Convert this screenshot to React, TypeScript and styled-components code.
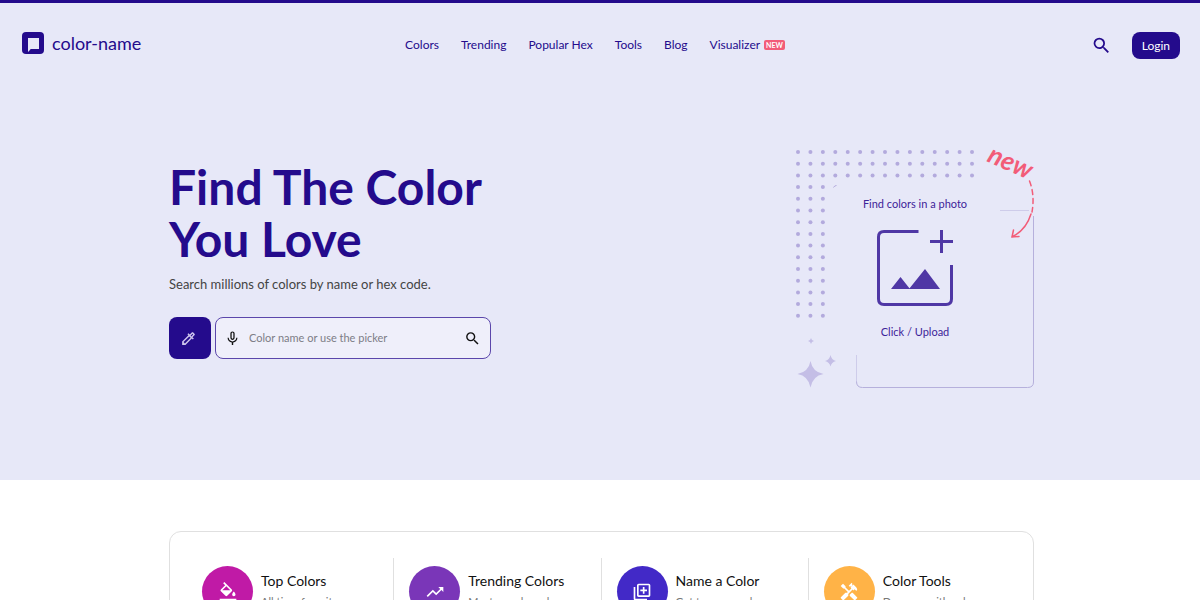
import React from "react";
import styled, { createGlobalStyle } from "styled-components";
import {
  MdSearch,
  MdMicNone,
  MdTrendingUp,
  MdFormatColorFill,
  MdOutlineLibraryAdd,
  MdHandyman,
  MdOutlineColorize,
} from "react-icons/md";

const GlobalStyle = createGlobalStyle`
  *, *::before, *::after { box-sizing: border-box; }
  body {
    margin: 0;
    background: #fff;
    color: #111;
    font-family: Lato, "Liberation Sans", sans-serif;
  }
  button, input { font: inherit; }
  h1, h2, p, ul { margin: 0; padding: 0; }
  a { color: inherit; text-decoration: none; }
`;

const Hero = styled.div`
  border-top: 3px solid #240b8c;
  background: #e7e8f8;
  color: #240b8c;
`;

const Header = styled.header`
  display: grid;
  grid-template-columns: 1fr auto 1fr;
  align-items: start;
  padding: 29px 20px 29px 22px;
`;

const Brand = styled.a`
  display: flex;
  align-items: center;
  gap: 8px;
  font-size: 18px;
  line-height: 22px;
`;

const Nav = styled.nav`
  display: flex;
  gap: 22px;
  margin-right: 12px;
  font-size: 12px;
  line-height: 26px;
`;

const NavLink = styled.a`
  display: flex;
  align-items: center;
  gap: 4px;
`;

const Badge = styled.span`
  padding: 0 2px;
  border-radius: 2px;
  background: #f25c78;
  color: #fff;
  font-size: 7px;
  font-weight: 700;
  line-height: 10px;
`;

const Actions = styled.div`
  display: flex;
  justify-content: flex-end;
  align-items: center;
  gap: 20px;
`;

const IconButton = styled.button<{ $color: string }>`
  display: flex;
  padding: 0;
  border: 0;
  background: none;
  color: ${(p) => p.$color};
  cursor: pointer;
`;

const LoginButton = styled.button`
  padding: 0 10px;
  border: 0;
  border-radius: 8px;
  background: #240b8c;
  color: #fff;
  font-size: 12px;
  line-height: 27px;
  cursor: pointer;
`;

const HeroBody = styled.section`
  display: flex;
  justify-content: space-between;
  align-items: flex-start;
  gap: 32px;
  padding: 60px 165px 90px 169px;
  @media (max-width: 900px) {
    flex-wrap: wrap;
    padding: 32px 24px;
  }
`;

const Intro = styled.div`
  flex: 0 1 322px;
  padding-top: 13px;
`;

const Title = styled.h1`
  font-size: 48px;
  font-weight: 700;
  line-height: 52px;
  white-space: nowrap;
`;

const Lead = styled.p`
  padding: 9px 0 23px;
  color: #444;
  font-size: 13px;
  line-height: 20px;
  white-space: nowrap;
`;

const SearchForm = styled.form`
  display: flex;
  gap: 4px;
`;

const PickerButton = styled.button`
  display: flex;
  justify-content: center;
  align-items: center;
  flex: none;
  width: 42px;
  height: 42px;
  padding: 0 3px 0 0;
  border: 0;
  border-radius: 8px;
  background: #240b8c;
  color: #cfc6ee;
  cursor: pointer;
`;

const SearchBox = styled.div`
  display: flex;
  align-items: center;
  flex: 1;
  gap: 8px;
  height: 42px;
  padding: 0 9px 0 8px;
  border: 1px solid #5b46ab;
  border-radius: 8px;
  background: #efeffa;
`;

const SearchInput = styled.input`
  flex: 1;
  min-width: 0;
  padding: 0;
  border: 0;
  outline: 0;
  background: none;
  color: #111;
  font-size: 11px;
  line-height: 20px;
  &::placeholder { color: #7d7d86; opacity: 1; }
`;

const UploadButton = styled.button`
  position: relative;
  display: flex;
  flex-direction: column;
  align-items: center;
  gap: 15px;
  flex: none;
  width: 240px;
  padding: 46px 0 48px;
  border: 0;
  background: none;
  color: #3d2399;
  font-size: 11px;
  line-height: 20px;
  cursor: pointer;
`;

const Ornament = styled.svg`
  position: absolute;
  inset: 0;
  overflow: visible;
`;

const FeatureSection = styled.section`
  padding: 51px 166px 51px 169px;
  @media (max-width: 900px) { padding: 32px 24px; }
`;

const FeatureList = styled.ul`
  display: grid;
  grid-template-columns: repeat(auto-fit, minmax(190px, 1fr));
  padding: 26px 18px 26px 16px;
  border: 1px solid #e0e0e0;
  border-radius: 12px;
  list-style: none;
`;

const Feature = styled.li`
  padding: 8px 0 8px 16px;
  & + & {
    padding-left: 15px;
    border-left: 1px solid #e0e0e0;
  }
`;

const FeatureLink = styled.a`
  display: flex;
  gap: 8px;
`;

const Disc = styled.span<{ $color: string }>`
  display: flex;
  justify-content: center;
  align-items: center;
  flex: none;
  width: 51px;
  height: 51px;
  border-radius: 50%;
  background: ${(p) => p.$color};
  color: #fff;
`;

const FeatureTitle = styled.h2`
  padding-top: 4px;
  font-size: 14px;
  font-weight: 400;
  line-height: 22px;
`;

const FeatureText = styled.p`
  color: #777;
  font-size: 11px;
  line-height: 20px;
`;

const links = ["Colors", "Trending", "Popular Hex", "Tools", "Blog"];

const features = [
  { title: "Top Colors", text: "All time favorites", color: "#c01aa6", Icon: MdFormatColorFill },
  { title: "Trending Colors", text: "Most popular colors", color: "#7a36b8", Icon: MdTrendingUp },
  { title: "Name a Color", text: "Get to name colors", color: "#4229c7", Icon: MdOutlineLibraryAdd },
  { title: "Color Tools", text: "Do more with colors", color: "#ffb347", Icon: MdHandyman },
];

const dots: Array<[number, number]> = [];
for (let row = 0; row < 15; row++) {
  for (let col = 0; col < (row < 3 ? 15 : 3); col++) {
    dots.push([3 + col * 12.43, 4 + row * 11.7]);
  }
}

function UploadOrnament() {
  return (
    <Ornament viewBox="0 0 240 242" width="240" height="242" aria-hidden="true">
      <g fill="#b3aadd">
        {dots.map(([x, y]) => (
          <circle key={`${x}-${y}`} cx={x} cy={y} r="2" />
        ))}
      </g>
      <path d="M38.500 39.500q1-2 3-2" fill="none" stroke="#b3aadd" />
      <g fill="none" stroke="#b6b0dc">
        <path d="M205 62.500H234" opacity=".5" />
        <path d="M238.500 68V234q0 5.500-6 5.500H67.500q-6 0-6-6" />
        <path d="M61.500 207V234" opacity=".5" />
      </g>
      <g fill="#c4bee6">
        <path d="M15.500 213Q17.500 224 28.500 226Q17.500 228 15.500 239.500Q13.500 228 2.500 226Q13.500 224 15.500 213Z" />
        <path d="M35.500 207Q36.500 212 41 213Q36.500 214 35.500 218.500Q34.500 214 30 213Q34.500 212 35.500 207Z" />
        <path d="M16 190Q16.500 192.500 19 193Q16.500 193.500 16 196Q15.500 193.500 13 193Q15.500 192.500 16 190Z" />
      </g>
      <g fill="none" stroke="#f25c78" strokeWidth="1.500" strokeLinecap="round">
        <path d="M234.500 33Q240 47 237 64" strokeDasharray="5 4" />
        <path d="M236 66Q231 82 217.500 88.500" />
        <path d="M218.500 82L217 89L224 88.500" />
      </g>
      <text
        x="191"
        y="13"
        transform="rotate(24 191 13)"
        fill="#f25c78"
        fontFamily="Lato, sans-serif"
        fontSize="26"
        fontStyle="italic"
        fontWeight="700"
      >
        new
      </text>
    </Ornament>
  );
}

function AddPhotoIcon() {
  return (
    <svg viewBox="0 0 78 78" width="78" height="78" aria-hidden="true">
      <g fill="none" stroke="#4f37a5" strokeWidth="3">
        <path d="M42.500 2.500H8Q2.500 2.500 2.500 8V70Q2.500 75.500 8 75.500H70Q75.500 75.500 75.500 70V36" />
        <path d="M65.500 1V24M54 12.500H77" />
      </g>
      <path d="M15 60L24.500 48L34 60ZM33 60L49 40L64 60Z" fill="#4f37a5" />
    </svg>
  );
}

export default function App() {
  return (
    <>
      <GlobalStyle />
      <Hero>
        <Header>
          <Brand href="#">
            <svg viewBox="0 0 22 22" width="22" height="22" aria-hidden="true">
              <rect width="22" height="22" rx="4" fill="#240b8c" />
              <path d="M6 6H17V17H9Q8 17 7.500 18.500L6 20Z" fill="#e7e8f8" />
            </svg>
            color-name
          </Brand>
          <Nav aria-label="Main">
            {links.map((label) => (
              <NavLink key={label} href="#">{label}</NavLink>
            ))}
            <NavLink href="#">
              Visualizer <Badge>NEW</Badge>
            </NavLink>
          </Nav>
          <Actions>
            <IconButton type="button" aria-label="Search" $color="#240b8c">
              <MdSearch size={21} />
            </IconButton>
            <LoginButton type="button">Login</LoginButton>
          </Actions>
        </Header>
        <HeroBody>
          <Intro>
            <Title>Find The Color<br />You Love</Title>
            <Lead>Search millions of colors by name or hex code.</Lead>
            <SearchForm role="search" onSubmit={(e) => e.preventDefault()}>
              <PickerButton type="button" aria-label="Pick a color">
                <MdOutlineColorize size={17} />
              </PickerButton>
              <SearchBox>
                <IconButton type="button" aria-label="Search by voice" $color="#111">
                  <MdMicNone size={17} />
                </IconButton>
                <SearchInput aria-label="Color name" placeholder="Color name or use the picker" />
                <IconButton type="submit" aria-label="Submit search" $color="#111">
                  <MdSearch size={17} />
                </IconButton>
              </SearchBox>
            </SearchForm>
          </Intro>
          <UploadButton type="button">
            <UploadOrnament />
            <span>Find colors in a photo</span>
            <AddPhotoIcon />
            <span>Click / Upload</span>
          </UploadButton>
        </HeroBody>
      </Hero>
      <FeatureSection>
        <FeatureList>
          {features.map(({ title, text, color, Icon }) => (
            <Feature key={title}>
              <FeatureLink href="#">
                <Disc $color={color}>
                  <Icon size={20} />
                </Disc>
                <div>
                  <FeatureTitle>{title}</FeatureTitle>
                  <FeatureText>{text}</FeatureText>
                </div>
              </FeatureLink>
            </Feature>
          ))}
        </FeatureList>
      </FeatureSection>
    </>
  );
}
